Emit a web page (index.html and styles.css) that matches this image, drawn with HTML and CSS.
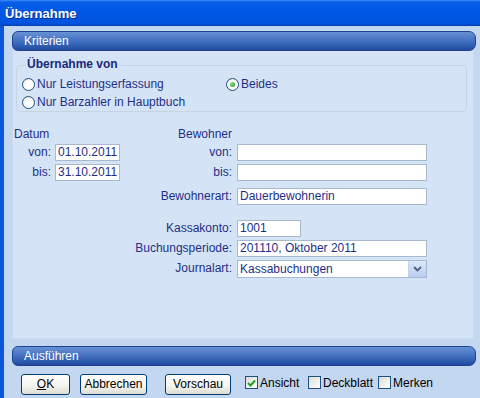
FILE: index.html
```html
<!DOCTYPE html>
<html lang="de">
<head>
  <meta charset="UTF-8">
  <title>Übernahme</title>
  <link rel="stylesheet" href="styles.css">
</head>
<body>
  <div class="window">
    <div class="titlebar">Übernahme</div>
    <div class="client">
      <div class="bar">Kriterien</div>
      <div class="panel">
        <div class="group">
          <span class="legend">Übernahme von</span>
          <div class="radios">
            <label class="opt"><span class="radio"></span>Nur Leistungserfassung</label>
            <label class="opt"><span class="radio on"></span>Beides</label>
            <label class="opt"><span class="radio"></span>Nur Barzahler in Hauptbuch</label>
          </div>
        </div>

        <div class="form">
          <div class="head h1">Datum</div>
          <div class="head h2">Bewohner</div>

          <div class="lbl c1">von:</div>
          <div class="field c2">01.10.2011</div>
          <div class="lbl c3">von:</div>
          <div class="field c4"></div>

          <div class="lbl c1">bis:</div>
          <div class="field c2">31.10.2011</div>
          <div class="lbl c3">bis:</div>
          <div class="field c4"></div>

          <div class="lbl c3 mt4">Bewohnerart:</div>
          <div class="field c4 mt4">Dauerbewohnerin</div>

          <div class="lbl c3 mt12">Kassakonto:</div>
          <div class="field c4 mt12 short">1001</div>

          <div class="lbl c3">Buchungsperiode:</div>
          <div class="field c4">201110, Oktober 2011</div>

          <div class="lbl c3">Journalart:</div>
          <div class="field c4 select">
            <span>Kassabuchungen</span>
            <span class="drop">
              <svg width="9" height="6" viewBox="0 0 9 6"><path d="M1 1 L4.5 4.5 L8 1" fill="none" stroke="#4d6185" stroke-width="1.8"/></svg>
            </span>
          </div>
        </div>
      </div>

      <div class="bar bar-bottom">Ausführen</div>
      <div class="actions">
        <button class="btn btn-ok"><u>O</u>K</button>
        <button class="btn btn-cancel">Abbrechen</button>
        <button class="btn btn-preview">Vorschau</button>
        <label class="check w1"><span class="box on">
          <svg width="9" height="8" viewBox="0 0 9 8"><path d="M1 4 L3.5 6.5 L8 1.5" fill="none" stroke="#21a121" stroke-width="2"/></svg>
        </span>Ansicht</label>
        <label class="check w2"><span class="box"></span>Deckblatt</label>
        <label class="check"><span class="box"></span>Merken</label>
      </div>
    </div>
  </div>
</body>
</html>
```

FILE: styles.css
```css
body {
  margin: 0;
  width: 480px;
  height: 398px;
  overflow: hidden;
  font-family: 'Liberation Sans', Arial, sans-serif;
  font-size: 12px;
  background: #c4d7f1;
}
.window {
  display: flex;
  flex-direction: column;
  height: 398px;
}
.titlebar {
  height: 27px;
  box-sizing: border-box;
  padding: 6px 0 0 5px;
  background: linear-gradient(to bottom, #3d8cf8 0, #0a5fe9 2px, #0058e6 40%, #0053dd 90%, #003fb3 100%);
  color: white;
  font-weight: bold;
  font-size: 13px;
  text-shadow: 1px 1px 0 #0a2f8a;
}
.client {
  flex: 1;
  border-left: 4px solid #0b55dc;
  padding: 5px 4px 0 8px;
  display: flex;
  flex-direction: column;
}
.bar {
  height: 20px;
  box-sizing: border-box;
  border: 1px solid #1c4290;
  border-radius: 6px 7px 7px 6px;
  background: linear-gradient(to bottom, #6892d6 0%, #4673c2 45%, #2d5bae 80%, #22489a 100%);
  color: white;
  padding: 2px 0 0 11px;
  line-height: 15px;
}
.panel {
  height: 288px;
  margin-right: 2px;
  background: #d5e3f6;
  border: 1px solid #cadaf0;
  border-top: none;
  box-sizing: border-box;
}
.bar-bottom {
  margin-top: 7px;
}
.group {
  margin: 14px 6px 0 3px;
  height: 47px;
  border: 1px solid #c8d3e2;
  border-radius: 4px;
  padding: 0 0 0 5px;
  box-sizing: border-box;
}
.legend {
  display: block;
  width: fit-content;
  height: 14px;
  margin: -9px 0 0 3px;
  padding: 0 2px;
  background: #d5e3f6;
  color: #1b2a78;
  font-weight: bold;
  line-height: 14px;
}
.radios {
  display: grid;
  grid-template-columns: 204px auto;
  grid-auto-rows: 18px;
  margin-top: 4px;
}
.opt {
  display: flex;
  align-items: center;
  gap: 2px;
  color: #1e2f86;
}
.radio {
  width: 13px;
  height: 13px;
  box-sizing: border-box;
  border: 1px solid #1c5180;
  border-radius: 50%;
  background: radial-gradient(circle at 60% 60%, #ffffff 40%, #dcdcd6 100%);
  display: flex;
  align-items: center;
  justify-content: center;
}
.radio.on::after {
  content: "";
  width: 5px;
  height: 5px;
  border-radius: 50%;
  background: radial-gradient(circle at 35% 35%, #7ee07e, #1f9a1f);
}
.form {
  display: grid;
  grid-template-columns: 41px 65px 117px 190px;
  row-gap: 3px;
  margin: 16px 0 0 1px;
  color: #1e2f86;
}
.head {
  height: 13px;
  line-height: 13px;
}
.h1 { grid-column: 1 / 3; }
.h2 { grid-column: 3 / 5; padding-left: 58px; }
.c1 { grid-column: 1; }
.c2 { grid-column: 2; }
.c3 { grid-column: 3; }
.c4 { grid-column: 4; }
.lbl {
  text-align: right;
  height: 17px;
  line-height: 17px;
  padding-right: 4px;
  white-space: nowrap;
}
.c3.lbl { padding-right: 5px; }
.field {
  background: white;
  border: 1px solid #a7b8cf;
  box-sizing: border-box;
  height: 17px;
  line-height: 15px;
  padding-left: 2px;
  color: #1e2f86;
  white-space: nowrap;
}
.short { width: 64px; }
.mt4 { margin-top: 4px; }
.mt12 { margin-top: 12px; }
.select {
  display: flex;
  justify-content: space-between;
  height: 18px;
  line-height: 16px;
}
.drop {
  width: 17px;
  height: 16px;
  background: linear-gradient(to bottom, #dde8fb, #b8cdf2);
  border-left: 1px solid #c2d2ec;
  display: flex;
  align-items: center;
  justify-content: center;
}
.actions {
  display: flex;
  align-items: center;
  height: 32px;
  padding-left: 9px;
}
.btn {
  height: 21px;
  box-sizing: border-box;
  border: 1px solid #003c74;
  border-radius: 3px;
  background: linear-gradient(to bottom, #ffffff 0%, #f3f3ee 60%, #dcdcd2 100%);
  font-family: 'Liberation Sans', Arial, sans-serif;
  font-size: 12px;
  color: #000;
  padding: 0;
  margin-top: 4px;
}
.btn-ok { width: 49px; margin-right: 10px; }
.btn-cancel { width: 67px; margin-right: 18px; }
.btn-preview { width: 66px; margin-right: 14px; }
.check {
  display: flex;
  align-items: center;
  gap: 2px;
  color: #000;
  margin-top: 1px;
}
.w1 { width: 63px; }
.w2 { width: 70px; }
.box {
  width: 13px;
  height: 13px;
  box-sizing: border-box;
  border: 1px solid #1c5180;
  background: linear-gradient(135deg, #dcdcd6, #ffffff);
  display: flex;
  align-items: center;
  justify-content: center;
}
```
